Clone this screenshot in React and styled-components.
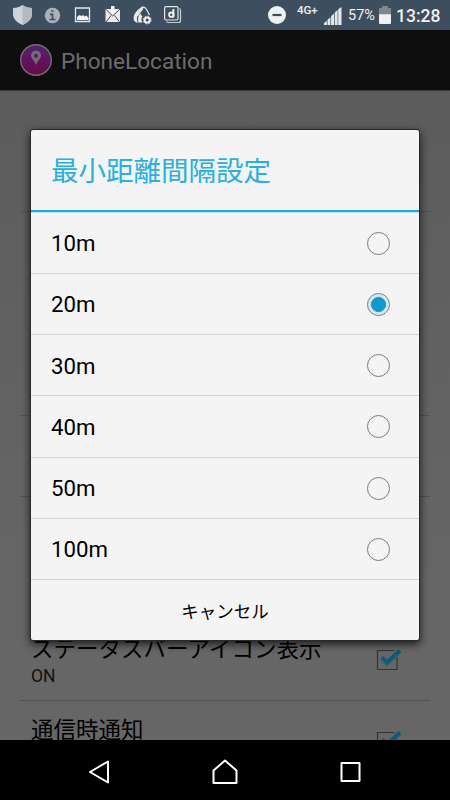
import { useState } from "react";
import styled, { createGlobalStyle } from "styled-components";

const GlobalStyle = createGlobalStyle`
  * {
    box-sizing: border-box;
  }
  body {
    margin: 0;
    background: #000;
    font-family: Roboto, "Noto Sans CJK JP", sans-serif;
  }
`;

const Phone = styled.div`
  position: relative;
  display: flex;
  flex-direction: column;
  width: 450px;
  height: 800px;
  overflow: hidden;
  background: #000;
`;

const StatusBar = styled.header`
  display: flex;
  justify-content: space-between;
  flex: none;
  height: 30px;
  background: #3d4f5e;
  color: #f0f1f2;

  svg {
    display: block;
    flex: none;
  }
`;

const StatusGroup = styled.div`
  display: flex;
  align-items: center;
  height: 30px;
`;

const Network = styled.span`
  align-self: flex-start;
  width: 22px;
  margin: 4px 5px 0 11px;
  font-size: 11.5px;
  font-weight: 500;
  line-height: 12px;
  white-space: nowrap;
`;

const Percent = styled.span`
  width: 28px;
  margin: 1px 3px 0 6px;
  font-size: 14.5px;
  line-height: 20px;
  white-space: nowrap;
`;

const Clock = styled.span`
  width: 54px;
  margin: 1px 0 0 5px;
  font-size: 17.5px;
  font-weight: 500;
  line-height: 20px;
  white-space: nowrap;
`;

const ActionBar = styled.div`
  display: flex;
  align-items: center;
  gap: 8px;
  flex: none;
  height: 60px;
  padding: 2px 20px 0 19px;
  background: #0e0e0e;
  color: #6c6c6c;
  font-size: 22.6px;
`;

const Settings = styled.main`
  flex: none;
  height: 650px;
  padding: 0 20px;
  overflow: hidden;
  border-top: 1px solid #3a3a3a;
  background: linear-gradient(#5c5c5c, #666 75%);
`;

const Setting = styled.section`
  display: flex;
  align-items: center;
  justify-content: space-between;
  height: ${({ $height }) => $height}px;
  padding: 0 29px 0 11px;
  border-bottom: ${({ $last }) => ($last ? "0" : "1px solid #525252")};
  color: #000;

  > svg {
    margin-bottom: 2px;
  }
`;

const SettingText = styled.div`
  padding-top: 2px;
`;

const SettingTitle = styled.div`
  margin-bottom: ${({ $raised }) => ($raised ? 23 : 0)}px;
  font-size: 22.5px;
  line-height: 30px;
  white-space: nowrap;
`;

const SettingValue = styled.div`
  font-size: 17.5px;
  line-height: 24px;
  color: #111;
`;

const Dialog = styled.div`
  position: absolute;
  top: 130px;
  left: 31px;
  width: 388px;
  height: 510px;
  border-radius: 2px;
  background: #f4f4f4;
  box-shadow: 0 0 0 1px #2a2a2a, 0 3px 9px 1px rgba(0, 0, 0, 0.75);
`;

const DialogTitle = styled.h1`
  height: 82px;
  margin: 0 0 0.5px;
  padding: 2px 0 0 20px;
  border-bottom: 2px solid #0db2e2;
  box-shadow: 0 1px 0 #c8e4ee;
  color: #27b0e2;
  font-size: 27.5px;
  font-weight: 400;
  line-height: 80px;
`;

const Option = styled.label`
  display: flex;
  align-items: center;
  justify-content: space-between;
  height: 61.25px;
  padding: 1px 29px 0 20px;
  border-bottom: 1px solid #d6d6d6;
  color: #000;
  font-size: 22.2px;
`;

const Radio = styled.button`
  display: flex;
  align-items: center;
  justify-content: center;
  width: 23px;
  height: 23px;
  padding: 0;
  border: 1px solid #7d7d7d;
  border-radius: 50%;
  background: ${({ $checked }) => ($checked ? "#dceef5" : "transparent")};

  &::after {
    content: "";
    flex: none;
    display: ${({ $checked }) => ($checked ? "block" : "none")};
    width: 13px;
    height: 13px;
    border: 1px solid #3a87a5;
    border-radius: 50%;
    background: #0b9bd0;
    box-shadow: 0 0 3px #8dcde4;
  }
`;

const CancelButton = styled.button`
  display: block;
  width: 100%;
  height: 60px;
  padding: 0;
  border: 0;
  background: transparent;
  color: #000;
  font-family: inherit;
  font-size: 17.5px;
`;

const NavBar = styled.nav`
  display: flex;
  align-items: center;
  justify-content: center;
  gap: 102px;
  flex: none;
  height: 60px;
  padding-top: 3px;
  background: #000;
`;

const options = ["10m", "20m", "30m", "40m", "50m", "100m"];

const NotificationIcons = () => (
  <svg width="190" height="30" viewBox="0 0 190 30" fill="none">
    <path
      d="M22.5 5c2.5 2 6 3 9.5 3v6c0 5-4 8.5-9.5 11C17 22.5 13 19 13 14V8c3.5 0 7-1 9.5-3z"
      fill="#d0d4d7"
    />
    <path d="M22.5 5c2.5 2 6 3 9.5 3v6c0 5-4 8.5-9.5 11z" fill="#b3bac0" />
    <circle cx="52.5" cy="15.5" r="7.7" fill="#aab2b9" />
    <path
      d="M51.2 11h2.3M50 14.3h2.5v5M49.5 19.5h6"
      stroke="#3d4f5e"
      strokeWidth="1.7"
    />
    <path d="M75.5 8h14v13.5h-14z" stroke="#e4e6e8" strokeWidth="1.3" />
    <path
      d="M77 20v-3l2.500-2 2 1 1.500-1 1.500 1.500 1.500-1 2.500 2V20z"
      fill="#f2f3f4"
    />
    <path d="M105.500 9H120v13h-14.500z" fill="#e8eaec" />
    <path
      d="M105.500 9l7.200 7 7.300-7M106 22l5-6.500M119.500 22l-5-6.500"
      stroke="#3d4f5e"
      strokeWidth="1"
    />
    <path d="M111 6h3.500v3.500h2.500L112.750 14 108.500 9.500h2.500z" fill="#f2f3f4" />
    {/* seed shaped app icon with a gear */}
    <path
      d="M142.500 6.500c-4.500 2.500-8 6.500-8.800 10.500-.5 3 .8 5 2.800 5.500h1.500c-2-3-1-7 1.500-10l4-5z"
      fill="#e9ebed"
    />
    <path
      d="M140 13.500c-2 3-2.500 6-1.500 9h4c-1.500-2.500-1.500-4 0-6z"
      fill="#e9ebed"
    />
    <path
      d="M141.500 7.500c2-1 4 0 5 2l3 5.500M143 8.500l-5.500 7.500"
      stroke="#e9ebed"
      strokeWidth="1.200"
    />
    <circle cx="147.200" cy="20" r="2.600" stroke="#f2f3f4" strokeWidth="2" />
    <circle
      cx="147.200"
      cy="20"
      r="3.900"
      stroke="#f2f3f4"
      strokeWidth="1"
      strokeDasharray="1.600 1.460"
    />
    <rect
      x="164.600"
      y="6.600"
      width="13.400"
      height="13.400"
      rx="1.500"
      stroke="#e4e6e8"
      strokeWidth="1.200"
    />
    <path
      d="M179.500 8.500q1 .5 1 1.500v10.500q0 2-2 2h-10q-1.500 0-2-1"
      stroke="#c7ccd0"
      strokeWidth="1.200"
    />
    <path d="M173.400 9v8.500" stroke="#f2f3f4" strokeWidth="1.900" />
    <circle cx="171.300" cy="14.700" r="2.200" stroke="#f2f3f4" strokeWidth="1.800" />
  </svg>
);

const DoNotDisturbIcon = () => (
  <svg width="18" height="30" viewBox="0 0 18 30">
    <circle cx="9" cy="15" r="9" fill="#f0f1f2" />
    <path d="M4.500 15h9" stroke="#3d4f5e" strokeWidth="2.200" />
  </svg>
);

const SignalIcon = () => (
  <svg width="18" height="30" viewBox="0 0 18 30" fill="#e4e7e9">
    <path d="M0 25v-2l2.800-2.300V25zM3.500 25v-5.300l2.900-2.500V25zM7.100 25v-8.800l2.900-2.600V25zM10.700 25V12.600l2.900-2.500V25zM14.200 25V9.200L17.500 7v18z" />
  </svg>
);

const BatteryIcon = () => (
  <svg width="12" height="30" viewBox="0 0 12 30">
    <path d="M0 8h3V6h6v2h3v7H0z" fill="#7c8790" />
    <path d="M0 14.300h12V23q0 1-1 1H1q-1 0-1-1z" fill="#f0f1f2" />
  </svg>
);

const AppLogo = () => (
  <svg width="34" height="34" viewBox="0 0 34 34">
    <defs>
      <linearGradient id="logo" x1="0" y1="0" x2="0" y2="1">
        <stop offset="0" stopColor="#52246a" />
        <stop offset="0.55" stopColor="#641062" />
        <stop offset="1" stopColor="#650e42" />
      </linearGradient>
    </defs>
    <circle
      cx="17"
      cy="16"
      r="15.300"
      fill="url(#logo)"
      stroke="#717171"
      strokeWidth="1.400"
    />
    <path
      d="M17 6.500a5 5 0 0 0-5 5c0 3 3.500 5 5 9.500 1.500-4.500 5-6.500 5-9.500a5 5 0 0 0-5-5zm0 3.200a2 2 0 1 1 0 4 2 2 0 0 1 0-4z"
      fill="#707070"
    />
  </svg>
);

const CheckIcon = () => (
  <svg width="26" height="24" viewBox="0 0 26 24" fill="none">
    <path d="M22 10v12.500H2.500v-19h17" stroke="#343434" strokeWidth="1.200" />
    <path
      d="M6.500 11l5.200 5.500L25 4"
      stroke="#28657c"
      strokeOpacity="0.400"
      strokeWidth="5.500"
    />
    <path d="M7 10.500l5 5L25 3.500" stroke="#075d7b" strokeWidth="3.800" />
  </svg>
);

const BackIcon = () => (
  <svg width="22" height="26" viewBox="0 0 22 26" fill="none">
    <path
      d="M20 2.500v21L2 13z"
      stroke="#fff"
      strokeWidth="2"
      strokeLinejoin="round"
    />
  </svg>
);

const HomeIcon = () => (
  <svg width="26" height="26" viewBox="0 0 26 26" fill="none">
    <path
      d="M1.500 11.500L13 1.500l11.500 10V24h-23z"
      stroke="#fff"
      strokeWidth="2"
      strokeLinejoin="round"
    />
  </svg>
);

const RecentIcon = () => (
  <svg width="22" height="26" viewBox="0 0 22 26" fill="none">
    <path
      d="M1.500 4h18v18h-18z"
      stroke="#fff"
      strokeWidth="2"
      strokeLinejoin="round"
    />
  </svg>
);

function App() {
  const [distance, setDistance] = useState("20m");

  return (
    <Phone>
      <GlobalStyle />
      <StatusBar>
        <StatusGroup>
          <NotificationIcons />
        </StatusGroup>
        <StatusGroup>
          <DoNotDisturbIcon />
          <Network>4G+</Network>
          <SignalIcon />
          <Percent>57%</Percent>
          <BatteryIcon />
          <Clock>13:28</Clock>
        </StatusGroup>
      </StatusBar>
      <ActionBar>
        <AppLogo />
        PhoneLocation
      </ActionBar>
      <Settings>
        <Setting $height={121} />
        <Setting $height={204} />
        <Setting $height={81} />
        <Setting $height={122} $last />
        <Setting $height={82}>
          <SettingText>
            <SettingTitle>ステータスバーアイコン表示</SettingTitle>
            <SettingValue>ON</SettingValue>
          </SettingText>
          <CheckIcon />
        </Setting>
        <Setting $height={82}>
          <SettingTitle $raised>通信時通知</SettingTitle>
          <CheckIcon />
        </Setting>
      </Settings>
      <NavBar>
        <BackIcon />
        <HomeIcon />
        <RecentIcon />
      </NavBar>
      <Dialog role="dialog">
        <DialogTitle>最小距離間隔設定</DialogTitle>
        {options.map((option) => (
          <Option key={option}>
            {option}
            <Radio
              type="button"
              role="radio"
              aria-checked={option === distance}
              $checked={option === distance}
              onClick={() => setDistance(option)}
            />
          </Option>
        ))}
        <CancelButton type="button">キャンセル</CancelButton>
      </Dialog>
    </Phone>
  );
}

export default App;
